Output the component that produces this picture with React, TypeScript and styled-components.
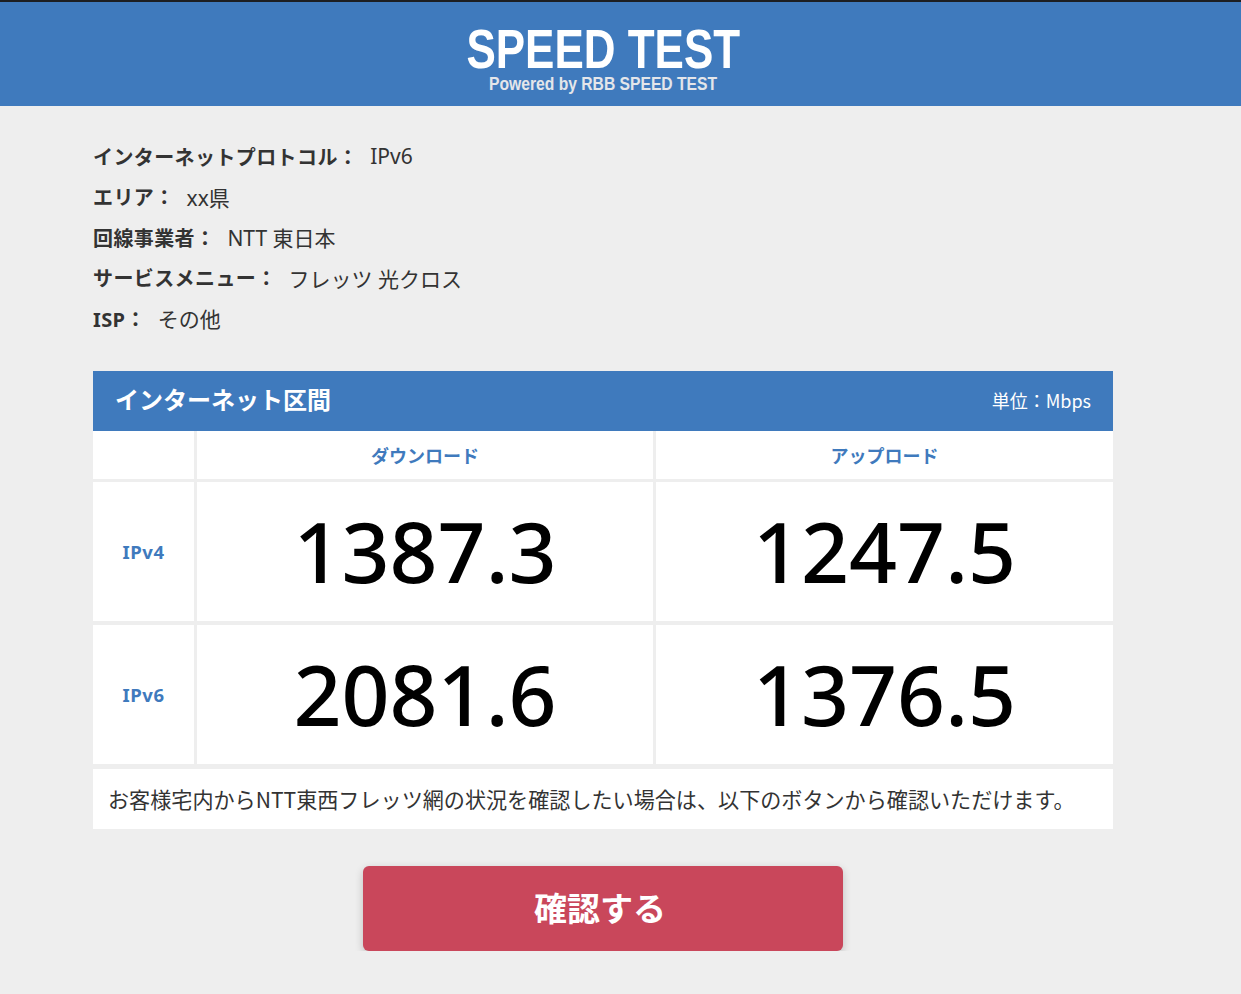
import React from "react";
import styled, { createGlobalStyle } from "styled-components";

const Global = createGlobalStyle`
  html, body { margin: 0; padding: 0; background: #eeeeee; }
  body { font-family: "Noto Sans", "Noto Sans CJK JP", sans-serif; color: #333; }
`;

const TopLine = styled.div`
  height: 2px;
  background: #1d1f22;
`;

const Header = styled.header`
  background: #3f7abd;
  height: 104px;
  width: 100%;
`;

const HeaderInner = styled.div`
  width: 1206px;
  display: flex;
  flex-direction: column;
  align-items: center;
  padding-top: 23px;
  box-sizing: border-box;
`;

const Logo = styled.div`
  font-family: "Liberation Sans", Arial, sans-serif;
  font-weight: 700;
  font-size: 56px;
  line-height: 48px;
  color: #fff;
  transform: scaleX(0.785);
  white-space: nowrap;
`;

const Powered = styled.div`
  font-family: "Liberation Sans", Arial, sans-serif;
  font-weight: 700;
  font-size: 18px;
  line-height: 18px;
  color: #e4e6ea;
  margin-top: 2px;
  transform: scaleX(0.87);
  white-space: nowrap;
`;

const Main = styled.main`
  width: 1020px;
  margin-left: 93px;
  display: flex;
  flex-direction: column;
`;

const Info = styled.div`
  padding-top: 30px;
  padding-bottom: 1px;
  display: flex;
  flex-direction: column;
`;

const InfoRow = styled.div`
  height: 40.5px;
  display: flex;
  align-items: center;
  font-size: 21px;
  font-family: "Noto Sans", "Noto Sans CJK JP", sans-serif;
  color: #333;
`;

const Label = styled.span`
  font-weight: 700;
  font-size: 20px;
  letter-spacing: 0.4px;
  margin-right: 12px;
`;

const Panel = styled.section`
  margin-top: 31px;
`;

const PanelHead = styled.div`
  height: 60px;
  background: #3f7abd;
  display: flex;
  align-items: center;
  justify-content: space-between;
  padding: 0 22px 4px 22px;
  box-sizing: border-box;
  color: #fff;
`;

const PanelTitle = styled.div`
  font-size: 24px;
  font-weight: 700;
  font-family: "Noto Sans CJK JP", sans-serif;
`;

const Unit = styled.div`
  font-size: 18px;
  font-family: "Noto Sans CJK JP", sans-serif;
  padding-top: 2px;
`;

const Grid = styled.div`
  display: grid;
  grid-template-columns: 101px 456px 1fr;
  grid-template-rows: 48px 139px 139px;
  gap: 3px;
  row-gap: 3.5px;
  background: #eeeeee;
`;

const Cell = styled.div<{ $kind?: "col" | "row" | "num" | "blank" }>`
  background: #fff;
  display: flex;
  align-items: center;
  justify-content: center;
  font-family: ${p => (p.$kind === "col" ? '"Noto Sans CJK JP", sans-serif' : '"Noto Sans", sans-serif')};
  color: ${p => (p.$kind === "num" ? "#000" : "#3f7abd")};
  font-weight: ${p => (p.$kind === "num" ? 500 : 700)};
  font-size: ${p => (p.$kind === "num" ? "84px" : p.$kind === "row" ? "18.5px" : "18px")};
  letter-spacing: ${p => (p.$kind === "row" ? "0.6px" : "0")};
  padding-bottom: ${p => (p.$kind === "num" ? "2px" : "0")};
  box-sizing: border-box;
`;

const Note = styled.div`
  margin-top: 5px;
  height: 60px;
  background: #fff;
  display: flex;
  align-items: center;
  padding-left: 15px;
  font-size: 21.1px;
  font-family: "Noto Sans CJK JP", sans-serif;
  color: #333;
  white-space: nowrap;
`;

const ButtonWrap = styled.div`
  display: flex;
  justify-content: center;
  margin-top: 37px;
`;

const Button = styled.button`
  width: 480px;
  height: 85px;
  background: #c9475b;
  border: none;
  border-radius: 6px;
  box-shadow: 0 3px 8px rgba(0, 0, 0, 0.2);
  color: #fff;
  font-size: 33px;
  font-weight: 700;
  font-family: "Noto Sans CJK JP", sans-serif;
  padding: 0 6px 2px 0;
  cursor: pointer;
`;

const info: [string, string][] = [
  ["インターネットプロトコル：", "IPv6"],
  ["エリア：", "xx県"],
  ["回線事業者：", "NTT 東日本"],
  ["サービスメニュー：", "フレッツ 光クロス"],
  ["ISP：", "その他"],
];

export default function App() {
  return (
    <>
      <Global />
      <TopLine />
      <Header>
        <HeaderInner>
          <Logo>SPEED TEST</Logo>
          <Powered>Powered by RBB SPEED TEST</Powered>
        </HeaderInner>
      </Header>
      <Main>
        <Info>
          {info.map(([l, v]) => (
            <InfoRow key={l}>
              <Label>{l}</Label>
              {v}
            </InfoRow>
          ))}
        </Info>
        <Panel>
          <PanelHead>
            <PanelTitle>インターネット区間</PanelTitle>
            <Unit>単位：Mbps</Unit>
          </PanelHead>
          <Grid>
            <Cell $kind="blank" />
            <Cell $kind="col">ダウンロード</Cell>
            <Cell $kind="col">アップロード</Cell>
            <Cell $kind="row">IPv4</Cell>
            <Cell $kind="num">1387.3</Cell>
            <Cell $kind="num">1247.5</Cell>
            <Cell $kind="row">IPv6</Cell>
            <Cell $kind="num">2081.6</Cell>
            <Cell $kind="num">1376.5</Cell>
          </Grid>
          <Note>お客様宅内からNTT東西フレッツ網の状況を確認したい場合は、以下のボタンから確認いただけます。</Note>
        </Panel>
        <ButtonWrap>
          <Button>確認する</Button>
        </ButtonWrap>
      </Main>
    </>
  );
}
